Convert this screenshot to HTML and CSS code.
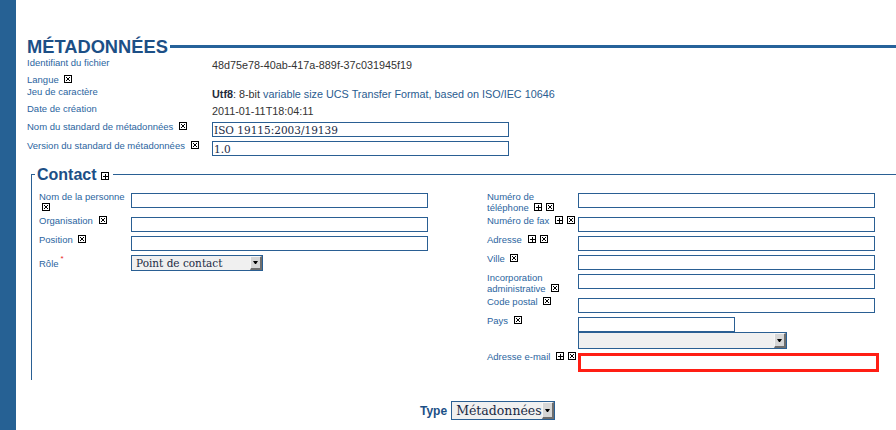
FILE: index.html
```html
<!DOCTYPE html>
<html lang="fr">
<head>
<meta charset="utf-8">
<title>Métadonnées</title>
<link rel="stylesheet" href="styles.css">
</head>
<body>
<div class="page">
  <aside class="sidebar"></aside>
  <main class="main">
    <div class="title-row">
      <h1 class="title">MÉTADONNÉES</h1>
      <span class="rule"></span>
    </div>

    <div class="meta">
      <div class="lbl">Identifiant du fichier</div>
      <div class="val">48d75e78-40ab-417a-889f-37c031945f19</div>

      <div class="lbl">Langue <svg class="ic" width="8" height="8" viewBox="0 0 8 8" shape-rendering="crispEdges"><rect x=".5" y=".5" width="7" height="7" fill="#fff" stroke="#000"/><path d="M2 2L6 6M6 2L2 6" stroke="#000"/></svg></div>
      <div class="val"></div>

      <div class="lbl">Jeu de caractère</div>
      <div class="val"><b>Utf8</b>: 8-bit <span class="hl">variable size UCS Transfer Format, based on ISO/IEC 10646</span></div>

      <div class="lbl">Date de création</div>
      <div class="val">2011-01-11T18:04:11</div>

      <div class="lbl">Nom du standard de métadonnées <svg class="ic" width="8" height="8" viewBox="0 0 8 8" shape-rendering="crispEdges"><rect x=".5" y=".5" width="7" height="7" fill="#fff" stroke="#000"/><path d="M2 2L6 6M6 2L2 6" stroke="#000"/></svg></div>
      <div class="val val-input"><input class="txt" type="text" value="ISO 19115:2003/19139"></div>

      <div class="lbl">Version du standard de métadonnées <svg class="ic" width="8" height="8" viewBox="0 0 8 8" shape-rendering="crispEdges"><rect x=".5" y=".5" width="7" height="7" fill="#fff" stroke="#000"/><path d="M2 2L6 6M6 2L2 6" stroke="#000"/></svg></div>
      <div class="val val-input"><input class="txt" type="text" value="1.0"></div>
    </div>

    <fieldset class="contact">
      <legend>Contact<svg class="ic ic-legend" width="8" height="8" viewBox="0 0 8 8" shape-rendering="crispEdges"><rect x=".5" y=".5" width="7" height="7" fill="#fff" stroke="#000"/><path d="M2 4H6.5M4 2V6.5" stroke="#000"/></svg></legend>
      <div class="contact-grid">
        <div class="col col-left">
          <div class="field">
            <div class="flabel">Nom de la personne <svg class="ic" width="8" height="8" viewBox="0 0 8 8" shape-rendering="crispEdges"><rect x=".5" y=".5" width="7" height="7" fill="#fff" stroke="#000"/><path d="M2 2L6 6M6 2L2 6" stroke="#000"/></svg></div>
            <input class="txt" type="text">
          </div>
          <div class="field">
            <div class="flabel">Organisation <svg class="ic" width="8" height="8" viewBox="0 0 8 8" shape-rendering="crispEdges"><rect x=".5" y=".5" width="7" height="7" fill="#fff" stroke="#000"/><path d="M2 2L6 6M6 2L2 6" stroke="#000"/></svg></div>
            <input class="txt" type="text">
          </div>
          <div class="field">
            <div class="flabel">Position <svg class="ic" width="8" height="8" viewBox="0 0 8 8" shape-rendering="crispEdges"><rect x=".5" y=".5" width="7" height="7" fill="#fff" stroke="#000"/><path d="M2 2L6 6M6 2L2 6" stroke="#000"/></svg></div>
            <input class="txt" type="text">
          </div>
          <div class="field">
            <div class="flabel">Rôle<span class="req">*</span></div>
            <span class="sel sel-role"><select><option>Point de contact</option></select></span>
          </div>
        </div>

        <div class="col col-right">
          <div class="field">
            <div class="flabel">Numéro de téléphone <svg class="ic" width="8" height="8" viewBox="0 0 8 8" shape-rendering="crispEdges"><rect x=".5" y=".5" width="7" height="7" fill="#fff" stroke="#000"/><path d="M2 4H6.5M4 2V6.5" stroke="#000"/></svg><svg class="ic" width="8" height="8" viewBox="0 0 8 8" shape-rendering="crispEdges"><rect x=".5" y=".5" width="7" height="7" fill="#fff" stroke="#000"/><path d="M2 2L6 6M6 2L2 6" stroke="#000"/></svg></div>
            <input class="txt" type="text">
          </div>
          <div class="field">
            <div class="flabel">Numéro de fax <svg class="ic" width="8" height="8" viewBox="0 0 8 8" shape-rendering="crispEdges"><rect x=".5" y=".5" width="7" height="7" fill="#fff" stroke="#000"/><path d="M2 4H6.5M4 2V6.5" stroke="#000"/></svg><svg class="ic" width="8" height="8" viewBox="0 0 8 8" shape-rendering="crispEdges"><rect x=".5" y=".5" width="7" height="7" fill="#fff" stroke="#000"/><path d="M2 2L6 6M6 2L2 6" stroke="#000"/></svg></div>
            <input class="txt" type="text">
          </div>
          <div class="field">
            <div class="flabel">Adresse <svg class="ic" width="8" height="8" viewBox="0 0 8 8" shape-rendering="crispEdges"><rect x=".5" y=".5" width="7" height="7" fill="#fff" stroke="#000"/><path d="M2 4H6.5M4 2V6.5" stroke="#000"/></svg><svg class="ic" width="8" height="8" viewBox="0 0 8 8" shape-rendering="crispEdges"><rect x=".5" y=".5" width="7" height="7" fill="#fff" stroke="#000"/><path d="M2 2L6 6M6 2L2 6" stroke="#000"/></svg></div>
            <input class="txt" type="text">
          </div>
          <div class="field">
            <div class="flabel">Ville <svg class="ic" width="8" height="8" viewBox="0 0 8 8" shape-rendering="crispEdges"><rect x=".5" y=".5" width="7" height="7" fill="#fff" stroke="#000"/><path d="M2 2L6 6M6 2L2 6" stroke="#000"/></svg></div>
            <input class="txt" type="text">
          </div>
          <div class="field">
            <div class="flabel">Incorporation administrative <svg class="ic" width="8" height="8" viewBox="0 0 8 8" shape-rendering="crispEdges"><rect x=".5" y=".5" width="7" height="7" fill="#fff" stroke="#000"/><path d="M2 2L6 6M6 2L2 6" stroke="#000"/></svg></div>
            <input class="txt" type="text">
          </div>
          <div class="field">
            <div class="flabel">Code postal <svg class="ic" width="8" height="8" viewBox="0 0 8 8" shape-rendering="crispEdges"><rect x=".5" y=".5" width="7" height="7" fill="#fff" stroke="#000"/><path d="M2 2L6 6M6 2L2 6" stroke="#000"/></svg></div>
            <input class="txt" type="text">
          </div>
          <div class="field">
            <div class="flabel">Pays <svg class="ic" width="8" height="8" viewBox="0 0 8 8" shape-rendering="crispEdges"><rect x=".5" y=".5" width="7" height="7" fill="#fff" stroke="#000"/><path d="M2 2L6 6M6 2L2 6" stroke="#000"/></svg></div>
            <div class="stack">
              <input class="txt txt-short" type="text">
              <span class="sel sel-country"><select><option></option></select></span>
            </div>
          </div>
          <div class="field">
            <div class="flabel">Adresse e-mail <svg class="ic" width="8" height="8" viewBox="0 0 8 8" shape-rendering="crispEdges"><rect x=".5" y=".5" width="7" height="7" fill="#fff" stroke="#000"/><path d="M2 4H6.5M4 2V6.5" stroke="#000"/></svg><svg class="ic" width="8" height="8" viewBox="0 0 8 8" shape-rendering="crispEdges"><rect x=".5" y=".5" width="7" height="7" fill="#fff" stroke="#000"/><path d="M2 2L6 6M6 2L2 6" stroke="#000"/></svg></div>
            <input class="txt invalid" type="text">
          </div>
        </div>
      </div>
    </fieldset>

    <div class="type-row">
      <span class="type-label">Type</span>
      <span class="sel sel-type"><select><option>Métadonnées</option></select></span>
    </div>
  </main>
</div>
</body>
</html>
```

FILE: styles.css
```css
html, body {
  margin: 0;
  height: 100%;
  background: #fff;
}

body {
  font-family: "Liberation Sans", Arial, sans-serif;
  overflow: hidden;
}

.page {
  display: flex;
  min-height: 100vh;
}

.sidebar {
  flex: none;
  width: 16px;
  background: #266194;
}

.main {
  flex: 1;
  min-width: 0;
  padding: 37px 0 0 11px;
}

/* title */
.title-row {
  display: flex;
}

.title {
  margin: 0;
  font-size: 18.3px;
  line-height: 20px;
  font-weight: bold;
  color: #1c4f86;
}

.rule {
  flex: 1;
  height: 3px;
  margin: 8px 0 0 2px;
  background: #26629a;
}

/* metadata table */
.meta {
  display: grid;
  grid-template-columns: 185px 1fr;
  grid-template-rows: 17px 12px 17px 18px 19px 19px;
}

.lbl {
  font-size: 9.5px;
  line-height: 11px;
  color: #2b65a0;
  white-space: nowrap;
}

.val {
  padding-top: 2px;
  font-size: 10.8px;
  line-height: 13px;
  color: #333;
  white-space: nowrap;
}

.val b {
  color: #1f2b3c;
}

.val .hl {
  color: #2a5c90;
}

.val-input {
  padding-top: 1px;
}

/* icons */
.ic {
  margin-left: 3px;
  vertical-align: baseline;
}

.ic + .ic {
  margin-left: 4px;
}

.ic-legend {
  margin-left: 4px;
}

/* text inputs */
.txt {
  display: block;
  flex: none;
  box-sizing: content-box;
  width: 294px;
  height: 13px;
  margin: 0;
  padding: 0 0 0 1px;
  border: 1px solid #2a5f93;
  border-radius: 0;
  background: #fff;
  font-family: "DejaVu Serif", serif;
  font-size: 10.5px;
  color: #1b2a44;
  outline: none;
}

.txt-short {
  width: 154px;
}

.txt.invalid {
  border: 3px solid #ff1e14;
}

/* contact fieldset */
.contact {
  min-width: 0;
  margin: 6px 0 0 4px;
  padding: 7px 0 8px 0;
  border: 0;
  border-top: 1px solid #2a6094;
  border-left: 1px solid #2a6094;
}

.contact legend {
  margin-left: 3px;
  padding: 0 4px 0 2px;
  font-size: 16px;
  line-height: 19px;
  font-weight: bold;
  color: #1c4f86;
}

.contact-grid {
  display: grid;
  grid-template-columns: 389px 388px;
  column-gap: 59px;
  align-items: start;
  padding-left: 7px;
}

.col {
  display: flex;
  flex-direction: column;
  gap: 2px;
}

.field {
  display: flex;
  align-items: flex-start;
}

.flabel {
  flex: none;
  width: 92px;
  font-size: 9.5px;
  line-height: 11px;
  color: #2b65a0;
}

.col-right .flabel {
  width: 91px;
}

.field > .txt,
.field > .sel,
.field > .stack {
  margin-top: 2px;
}

.stack {
  display: flex;
  flex-direction: column;
  align-items: flex-start;
}

.req {
  margin-left: 2px;
  font-size: 8px;
  vertical-align: 6px;
  color: #e8261b;
}

/* selects */
.sel {
  position: relative;
  display: inline-block;
  flex: none;
}

.sel select {
  display: block;
  box-sizing: border-box;
  margin: 0;
  padding: 0 12px 0 4px;
  -webkit-appearance: none;
  appearance: none;
  border: 1px solid #2a5f93;
  border-radius: 0;
  background: #f0f0f0;
  font-family: "DejaVu Serif", serif;
  color: #1b2a44;
  outline: none;
}

.sel::after {
  content: "";
  position: absolute;
  top: 1px;
  right: 1px;
  bottom: 1px;
  width: 12px;
  box-sizing: border-box;
  background: #d6d6d6;
  border-top: 1px solid #f6f6f6;
  border-left: 1px solid #f6f6f6;
  border-right: 2px solid #6e6e6e;
  border-bottom: 2px solid #6e6e6e;
  pointer-events: none;
}

.sel::before {
  content: "";
  position: absolute;
  z-index: 1;
  top: 50%;
  right: 5px;
  width: 1px;
  height: 0;
  margin-top: -2px;
  border-left: 2px solid transparent;
  border-right: 2px solid transparent;
  border-top: 3px solid #000;
  pointer-events: none;
}

.sel-role select {
  width: 132px;
  height: 16px;
  font-size: 10.5px;
  line-height: 14px;
}

.sel-country select {
  width: 209px;
  height: 17px;
  font-size: 10.5px;
}

.sel-type select {
  width: 104px;
  height: 19px;
  padding-right: 10px;
  font-size: 12.5px;
  line-height: 17px;
}

/* type row */
.type-row {
  display: flex;
  align-items: center;
  gap: 4px;
  margin-top: 21px;
  padding-left: 393px;
}

.type-label {
  font-size: 12px;
  line-height: 14px;
  font-weight: bold;
  color: #1c4f86;
}
```
